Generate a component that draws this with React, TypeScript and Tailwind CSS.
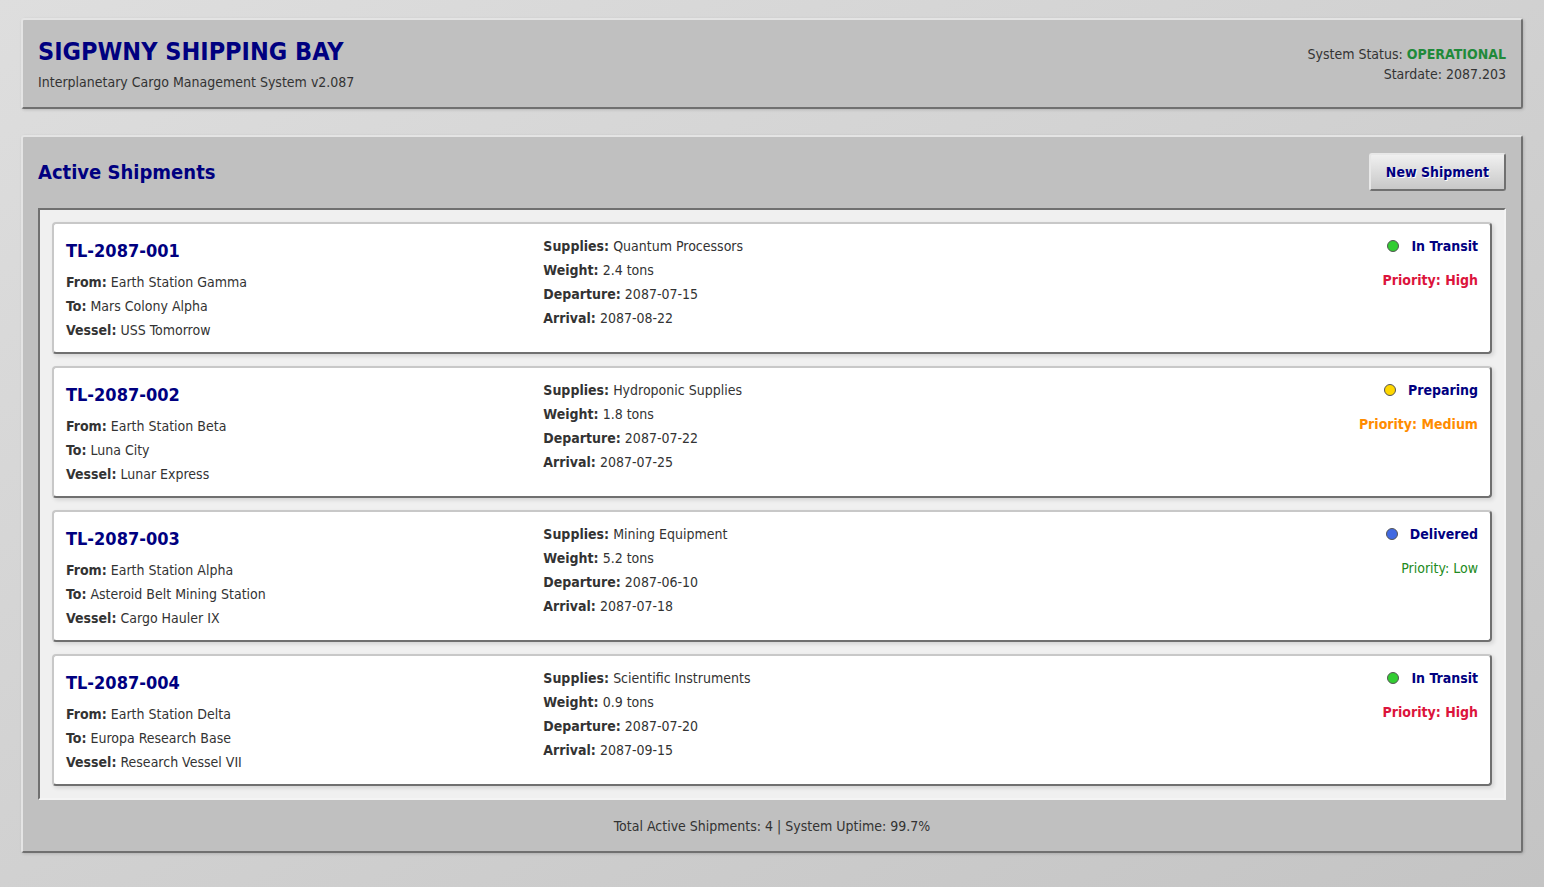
// Shipping bay dashboard — retro grey panels

type Shipment = {
  id: string;
  from: string;
  to: string;
  vessel: string;
  supplies: string;
  weight: string;
  departure: string;
  arrival: string;
  status: string;
  dot: string;
  priority: "High" | "Medium" | "Low";
};

const shipments: Shipment[] = [
  {
    id: "TL-2087-001",
    from: "Earth Station Gamma",
    to: "Mars Colony Alpha",
    vessel: "USS Tomorrow",
    supplies: "Quantum Processors",
    weight: "2.4 tons",
    departure: "2087-07-15",
    arrival: "2087-08-22",
    status: "In Transit",
    dot: "bg-[#32cd32]",
    priority: "High",
  },
  {
    id: "TL-2087-002",
    from: "Earth Station Beta",
    to: "Luna City",
    vessel: "Lunar Express",
    supplies: "Hydroponic Supplies",
    weight: "1.8 tons",
    departure: "2087-07-22",
    arrival: "2087-07-25",
    status: "Preparing",
    dot: "bg-[#ffd700]",
    priority: "Medium",
  },
  {
    id: "TL-2087-003",
    from: "Earth Station Alpha",
    to: "Asteroid Belt Mining Station",
    vessel: "Cargo Hauler IX",
    supplies: "Mining Equipment",
    weight: "5.2 tons",
    departure: "2087-06-10",
    arrival: "2087-07-18",
    status: "Delivered",
    dot: "bg-[#4169e1]",
    priority: "Low",
  },
  {
    id: "TL-2087-004",
    from: "Earth Station Delta",
    to: "Europa Research Base",
    vessel: "Research Vessel VII",
    supplies: "Scientific Instruments",
    weight: "0.9 tons",
    departure: "2087-07-20",
    arrival: "2087-09-15",
    status: "In Transit",
    dot: "bg-[#32cd32]",
    priority: "High",
  },
];

const priorityClass = {
  High: "font-bold text-[#dc143c]",
  Medium: "font-bold text-[#ff8c00]",
  Low: "font-normal text-[#228b22]",
};

function Field({ label, value }: { label: string; value: string }) {
  return (
    <div className="leading-[24px]">
      <span className="font-bold">{label}:</span> {value}
    </div>
  );
}

function ShipmentCard({ s }: { s: Shipment }) {
  return (
    <div className="grid grid-cols-3 gap-5 rounded-[4px] border-2 border-t-[#c8c8c8] border-l-[#c8c8c8] border-r-[#707070] border-b-[#707070] bg-white px-3 pt-3 pb-[10px] text-[14px] text-[#333] shadow-[2px_2px_4px_rgba(0,0,0,0.12)]">
      <div>
        <h3 className="mb-[4px] text-[18px] font-bold leading-[30px] text-[#000080]">{s.id}</h3>
        <Field label="From" value={s.from} />
        <Field label="To" value={s.to} />
        <Field label="Vessel" value={s.vessel} />
      </div>
      <div className="-mt-[2px]">
        <Field label="Supplies" value={s.supplies} />
        <Field label="Weight" value={s.weight} />
        <Field label="Departure" value={s.departure} />
        <Field label="Arrival" value={s.arrival} />
      </div>
      <div className="flex flex-col items-end">
        <div className="-mt-[1px] flex h-[22px] items-center gap-[12px] font-bold text-[#000080]">
          <span className={`h-[12px] w-[12px] rounded-full border border-[#555] ${s.dot}`} />
          {s.status}
        </div>
        <div className={`mt-[11px] leading-[24px] ${priorityClass[s.priority]}`}>Priority: {s.priority}</div>
      </div>
    </div>
  );
}

export default function App() {
  return (
    <div
      className="min-h-screen bg-gradient-to-br from-[#dedede] to-[#c4c4c4] px-[21px] pt-[18px] pb-[20px] text-[#333]"
      style={{ fontFamily: '"DejaVu Sans Condensed", "DejaVu Sans", Verdana, sans-serif' }}
    >
      {/* Header */}
      <header className="flex items-center justify-between rounded-[3px] border-2 border-t-[#e4e4e4] border-l-[#e4e4e4] border-r-[#707070] border-b-[#707070] bg-[#c0c0c0] px-[15px] py-[15px] shadow-[1px_1px_3px_rgba(0,0,0,0.15)]">
        <div>
          <h1 className="mb-[3px] text-[25px] font-bold leading-[34px] text-[#000080]">SIGPWNY SHIPPING BAY</h1>
          <div className="text-[14px] leading-[20px]">Interplanetary Cargo Management System v2.087</div>
        </div>
        <div className="text-right text-[14px] leading-[20px]">
          <div>
            System Status: <span className="font-bold text-[#1f8a3a]">OPERATIONAL</span>
          </div>
          <div>Stardate: 2087.203</div>
        </div>
      </header>

      {/* Main panel */}
      <main className="mt-[26px] rounded-[3px] border-2 border-t-[#e4e4e4] border-l-[#e4e4e4] border-r-[#707070] border-b-[#707070] bg-[#c0c0c0] px-[15px] pt-[16px] pb-[13px] shadow-[1px_1px_3px_rgba(0,0,0,0.15)]">
        <div className="mb-[17px] flex items-center justify-between">
          <h2 className="text-[20px] font-bold leading-[28px] text-[#000080]">Active Shipments</h2>
          <button className="h-[38px] rounded-[3px] border-2 border-t-[#e8e8e8] border-l-[#e8e8e8] border-r-[#707070] border-b-[#707070] bg-gradient-to-b from-[#f0f0f0] to-[#c8c8c8] px-[15px] text-[14px] font-bold text-[#000080] [text-shadow:1px_1px_0_#fff]">
            New Shipment
          </button>
        </div>

        <div className="flex flex-col gap-[12px] border-2 border-t-[#707070] border-l-[#707070] border-r-[#f4f4f4] border-b-[#f4f4f4] bg-[#f0f0f0] p-3">
          {shipments.map((s) => (
            <ShipmentCard key={s.id} s={s} />
          ))}
        </div>

        <div className="mt-[14px] text-center text-[14px] leading-[24px] text-[#333]">
          Total Active Shipments: 4 | System Uptime: 99.7%
        </div>
      </main>
    </div>
  );
}
